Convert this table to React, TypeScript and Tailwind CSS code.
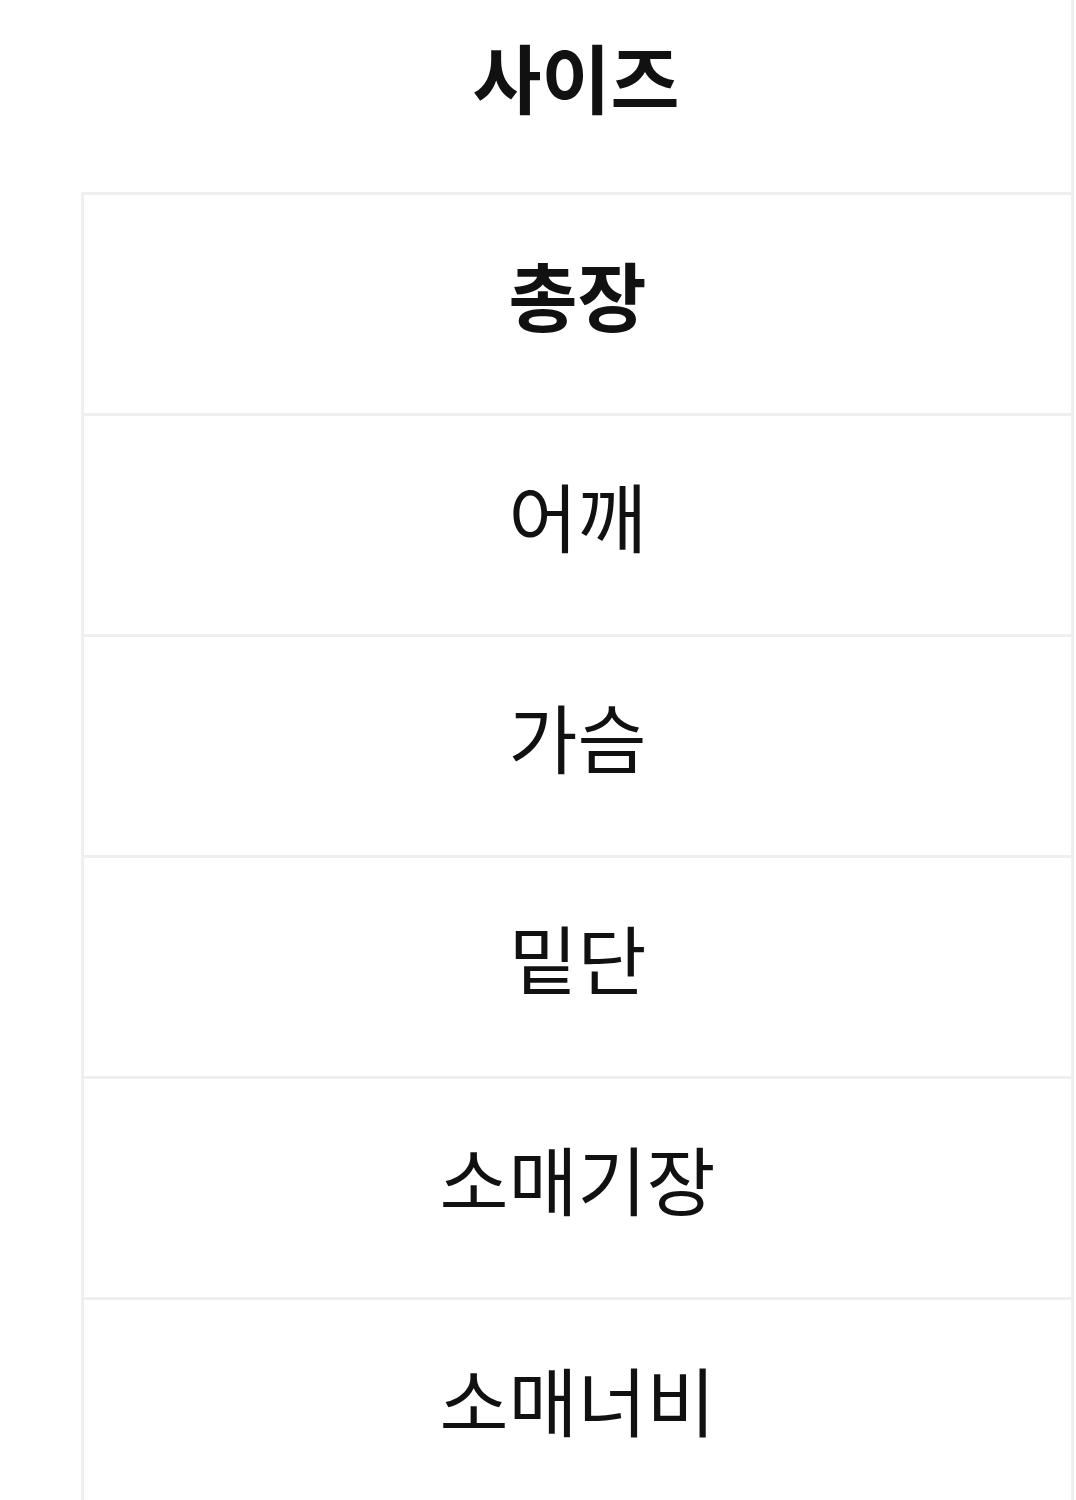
const rows = [
  { label: "총장", bold: true },
  { label: "어깨" },
  { label: "가슴" },
  { label: "밑단" },
  { label: "소매기장" },
  { label: "소매너비" },
]

const App = () => {
  return (
    <div className="min-h-[1500px] bg-white font-['Noto_Sans_CJK_KR','Noto_Sans',sans-serif] text-[#111111]">
      <div className="ml-[81px] w-[993px]">
        <div className="flex h-[192px] items-center justify-center border-r-[3px] border-[#efefef] pb-[42px]">
          <span className="text-[75px] font-bold leading-none">사이즈</span>
        </div>
        {rows.map((row) => (
          <div
            key={row.label}
            className="flex h-[221px] items-center justify-center border-x-[3px] border-t-[3px] border-[#efefef] pb-[22px]"
          >
            <span className={`text-[75px] leading-none ${row.bold ? "font-bold" : "font-normal"}`}>
              {row.label}
            </span>
          </div>
        ))}
      </div>
    </div>
  )
}

export default App
